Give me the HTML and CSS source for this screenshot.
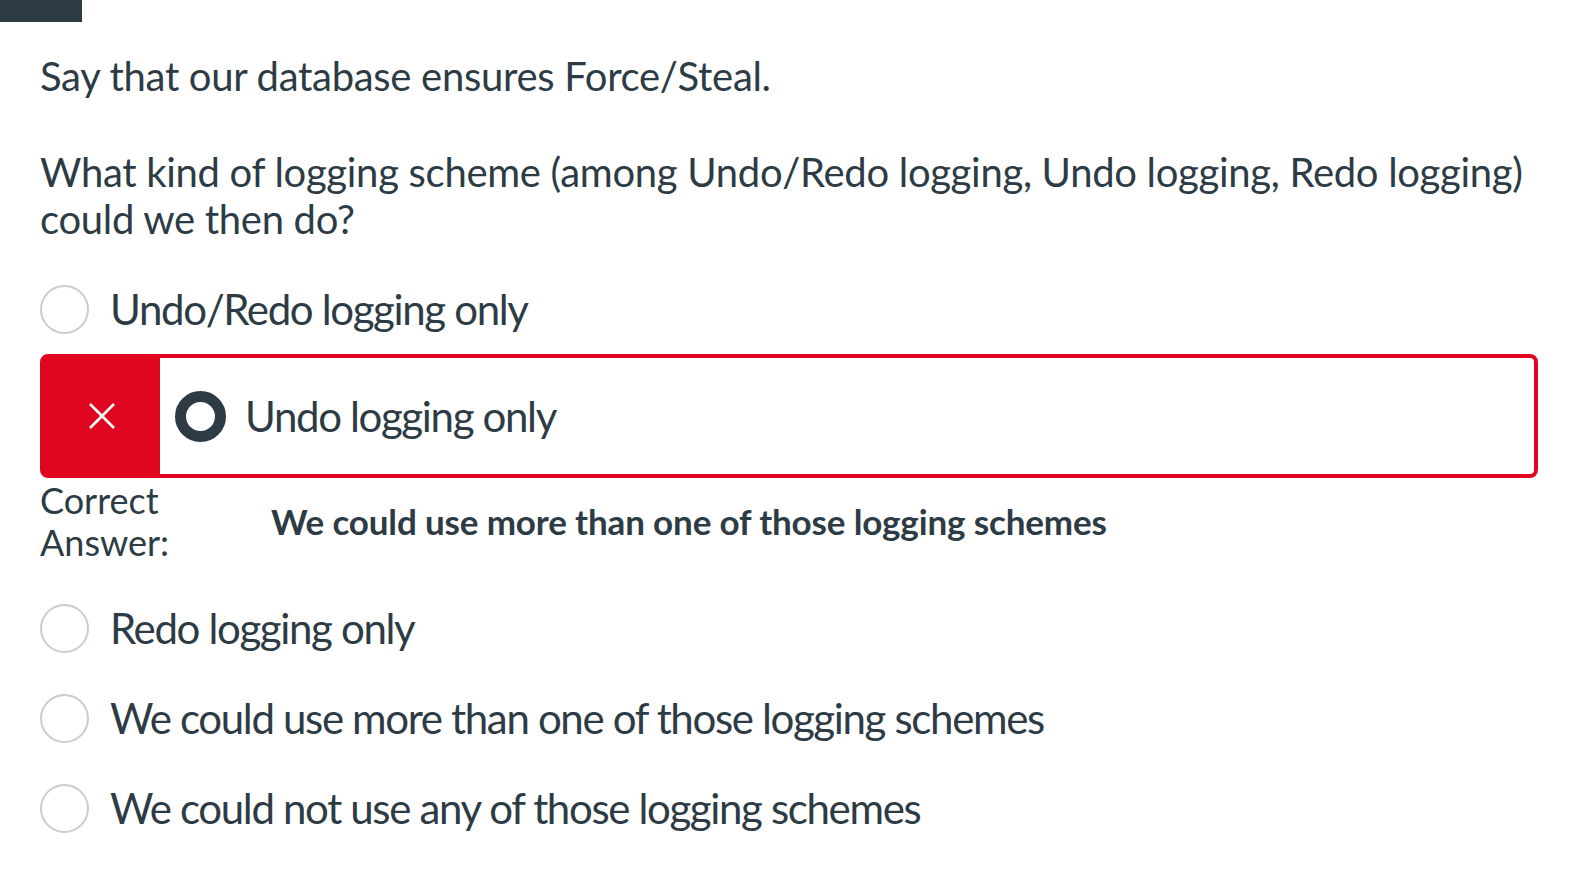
FILE: index.html
```html
<!DOCTYPE html>
<html>
<head>
<meta charset="utf-8">
<link rel="stylesheet" href="styles.css">
</head>
<body>
<div class="topbar"></div>
<div class="question">
  <p class="q-line">Say that our database ensures Force/Steal.</p>
  <p class="q-line">What kind of logging scheme (among Undo/Redo logging, Undo logging, Redo logging) could we then do?</p>
</div>
<div class="answers">
  <div class="option">
    <span class="radio"></span>
    <span class="label">Undo/Redo logging only</span>
  </div>
  <div class="option wrong">
    <div class="flag">
      <svg width="28" height="28" viewBox="0 0 28 28"><path d="M2 2 L26 26 M26 2 L2 26" stroke="#fff" stroke-width="2.6" fill="none"/></svg>
    </div>
    <div class="wrong-body">
      <span class="radio checked"></span>
      <span class="label">Undo logging only</span>
    </div>
  </div>
  <div class="correct">
    <div class="correct-label">Correct<br>Answer:</div>
    <div class="correct-text">We could use more than one of those logging schemes</div>
  </div>
  <div class="option">
    <span class="radio"></span>
    <span class="label">Redo logging only</span>
  </div>
  <div class="option">
    <span class="radio"></span>
    <span class="label">We could use more than one of those logging schemes</span>
  </div>
  <div class="option">
    <span class="radio"></span>
    <span class="label">We could not use any of those logging schemes</span>
  </div>
</div>
</body>
</html>
```
FILE: styles.css
```css
html, body {
  margin: 0;
  padding: 0;
  background: #fff;
}
body {
  font-family: Lato, "Open Sans", sans-serif;
  color: #2d3b45;
}
.topbar {
  width: 82px;
  height: 22px;
  background: #2d3b45;
}
.question {
  padding: 0 40px 0 40px;
  font-size: 40px;
  letter-spacing: -0.3px;
  line-height: 47px;
}
.q-line {
  margin: 31px 0 0 0;
}
.q-line + .q-line {
  margin-top: 49px;
}
.answers {
  padding: 0 46px 0 40px;
  margin-top: 21px;
}
.option {
  display: flex;
  align-items: center;
  height: 90px;
  font-size: 42px;
  letter-spacing: -1.35px;
}
.radio {
  width: 49px;
  height: 49px;
  border: 2px solid #c7cdd1;
  border-radius: 50%;
  box-sizing: border-box;
  flex: none;
  margin-right: 21px;
  background: #fff;
}
.radio.checked {
  width: 51px;
  height: 51px;
  border: 11px solid #2d3b45;
  margin-right: 19px;
}
.option.wrong {
  height: 124px;
  border: 4px solid #e0061f;
  border-radius: 8px;
  box-sizing: border-box;
  align-items: stretch;
}
.flag {
  width: 116px;
  background: #e0061f;
  display: flex;
  align-items: center;
  justify-content: center;
  flex: none;
}
.wrong-body {
  display: flex;
  align-items: center;
  padding-left: 15px;
}
.correct {
  display: flex;
  align-items: center;
  margin-top: 1px;
  height: 84px;
  margin-bottom: 20px;
}
.correct-label {
  width: 231px;
  flex: none;
  font-size: 36px;
  line-height: 42px;
}
.correct-text {
  font-size: 35px;
  letter-spacing: -0.15px;
  font-weight: 700;
}
```
